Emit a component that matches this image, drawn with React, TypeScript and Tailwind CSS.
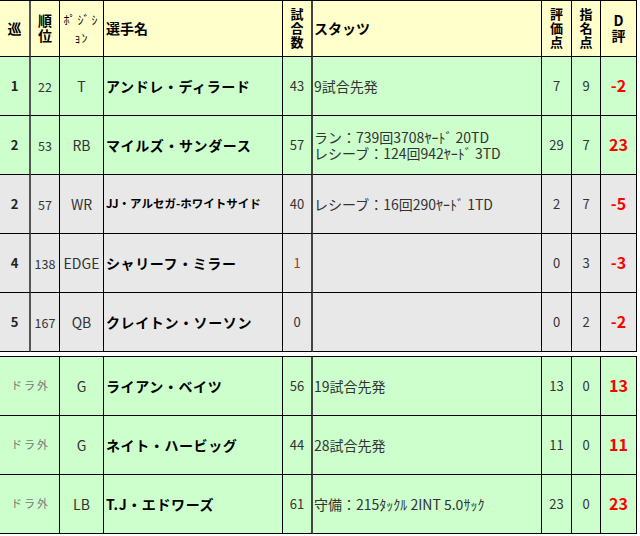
type Row = {
  round: string;
  rank?: string;
  pos: string;
  name: string;
  nameSmall?: boolean;
  games: string;
  gamesRed?: boolean;
  stats: string;
  evalPt: string;
  pick: string;
  d: string;
  gray?: boolean;
};

const drafted: Row[] = [
  { round: "1", rank: "22", pos: "T", name: "アンドレ・ディラード", games: "43", stats: "9試合先発", evalPt: "7", pick: "9", d: "-2" },
  {
    round: "2",
    rank: "53",
    pos: "RB",
    name: "マイルズ・サンダース",
    games: "57",
    stats: "ラン：739回3708ﾔｰﾄﾞ 20TD\nレシーブ：124回942ﾔｰﾄﾞ 3TD",
    evalPt: "29",
    pick: "7",
    d: "23",
  },
  {
    round: "2",
    rank: "57",
    pos: "WR",
    name: "JJ・アルセガ-ホワイトサイド",
    nameSmall: true,
    games: "40",
    stats: "レシーブ：16回290ﾔｰﾄﾞ 1TD",
    evalPt: "2",
    pick: "7",
    d: "-5",
    gray: true,
  },
  { round: "4", rank: "138", pos: "EDGE", name: "シャリーフ・ミラー", games: "1", gamesRed: true, stats: "", evalPt: "0", pick: "3", d: "-3", gray: true },
  { round: "5", rank: "167", pos: "QB", name: "クレイトン・ソーソン", games: "0", stats: "", evalPt: "0", pick: "2", d: "-2", gray: true },
];

const undrafted: Row[] = [
  { round: "ドラ外", pos: "G", name: "ライアン・ベイツ", games: "56", stats: "19試合先発", evalPt: "13", pick: "0", d: "13" },
  { round: "ドラ外", pos: "G", name: "ネイト・ハービッグ", games: "44", stats: "28試合先発", evalPt: "11", pick: "0", d: "11" },
  { round: "ドラ外", pos: "LB", name: "T.J・エドワーズ", games: "61", stats: "守備：215ﾀｯｸﾙ 2INT 5.0ｻｯｸ", evalPt: "23", pick: "0", d: "23" },
];

const grid = "grid grid-cols-[31px_29px_44px_179px_30px_229px_30px_29px_36px]";
const cell = "border-r border-b border-black flex items-center justify-center";
// stacked header labels (one character per line)
const vert = "[writing-mode:vertical-rl] [text-orientation:upright] leading-none";

function TableRow({ row }: { row: Row }) {
  const bg = row.gray ? "bg-[#e8e8e8]" : "bg-[#ccffcc]";
  return (
    <div className={`${grid} h-[59px] ${bg}`}>
      {row.rank ? (
        <>
          <div className={`${cell} border-r-2 border-r-[#555] text-[13px] font-bold text-[#222]`}>{row.round}</div>
          <div className={`${cell} text-[12.5px] text-[#333]`}>{row.rank}</div>
        </>
      ) : (
        <div className={`${cell} col-span-2 pl-[2px] text-[11px] tracking-[2px] text-[#777]`}>{row.round}</div>
      )}
      <div className={`${cell} text-[14px] text-[#333]`}>{row.pos}</div>
      <div
        className={`${cell} !justify-start pl-[2px] font-bold text-black whitespace-nowrap ${
          row.nameSmall ? "text-[11.5px]" : "text-[14px] tracking-[0.6px]"
        }`}
      >
        {row.name}
      </div>
      <div className={`${cell} border-r-2 border-r-[#444] text-[13px] ${row.gamesRed ? "text-[#b03030]" : "text-[#333]"}`}>
        {row.games}
      </div>
      <div className={`${cell} !justify-start pl-[1px] text-[14px] leading-[16px] text-[#333] whitespace-pre`}>
        {row.stats}
      </div>
      <div className={`${cell} text-[13px] text-[#333]`}>{row.evalPt}</div>
      <div className={`${cell} text-[13px] text-[#333]`}>{row.pick}</div>
      <div className={`${cell} text-[16px] font-bold text-[#ff0000]`}>{row.d}</div>
    </div>
  );
}

export default function App() {
  return (
    <div className="w-[640px] h-[536px] bg-white font-['Noto_Sans_CJK_JP','Noto_Sans',sans-serif] leading-[1.2]">
      <div className="w-[637px] border-t border-black">
        <div className={`${grid} h-[56px] bg-[#ffffcc] font-bold text-black`}>
          <div className={`${cell} border-r-2 border-r-[#555] text-[14px]`}>巡</div>
          <div className={cell}>
            <span className={`${vert} text-[14px] tracking-[1px]`}>順位</span>
          </div>
          <div className={`${cell} flex-col text-[12px] leading-[18px] font-normal`}>
            <span className="tracking-[2px]">ﾎﾟｼﾞｼ</span>
            <span className="tracking-[1px]">ｮﾝ</span>
          </div>
          <div className={`${cell} !justify-start pl-[2px] text-[14px]`}>選手名</div>
          <div className={`${cell} border-r-2 border-r-[#444]`}>
            <span className={`${vert} text-[13px] tracking-[1px]`}>試合数</span>
          </div>
          <div className={`${cell} !justify-start pl-[1px] text-[14px]`}>スタッツ</div>
          <div className={cell}>
            <span className={`${vert} text-[13px] tracking-[1px]`}>評価点</span>
          </div>
          <div className={cell}>
            <span className={`${vert} text-[13px] tracking-[1px]`}>指名点</span>
          </div>
          <div className={cell}>
            <span className={`${vert} text-[14px] tracking-[1px]`}>D評</span>
          </div>
        </div>
        {drafted.map((r, i) => (
          <TableRow key={i} row={r} />
        ))}
      </div>
      <div className="w-[637px] mt-[4px] border-t border-black">
        {undrafted.map((r, i) => (
          <TableRow key={i} row={r} />
        ))}
      </div>
    </div>
  );
}
